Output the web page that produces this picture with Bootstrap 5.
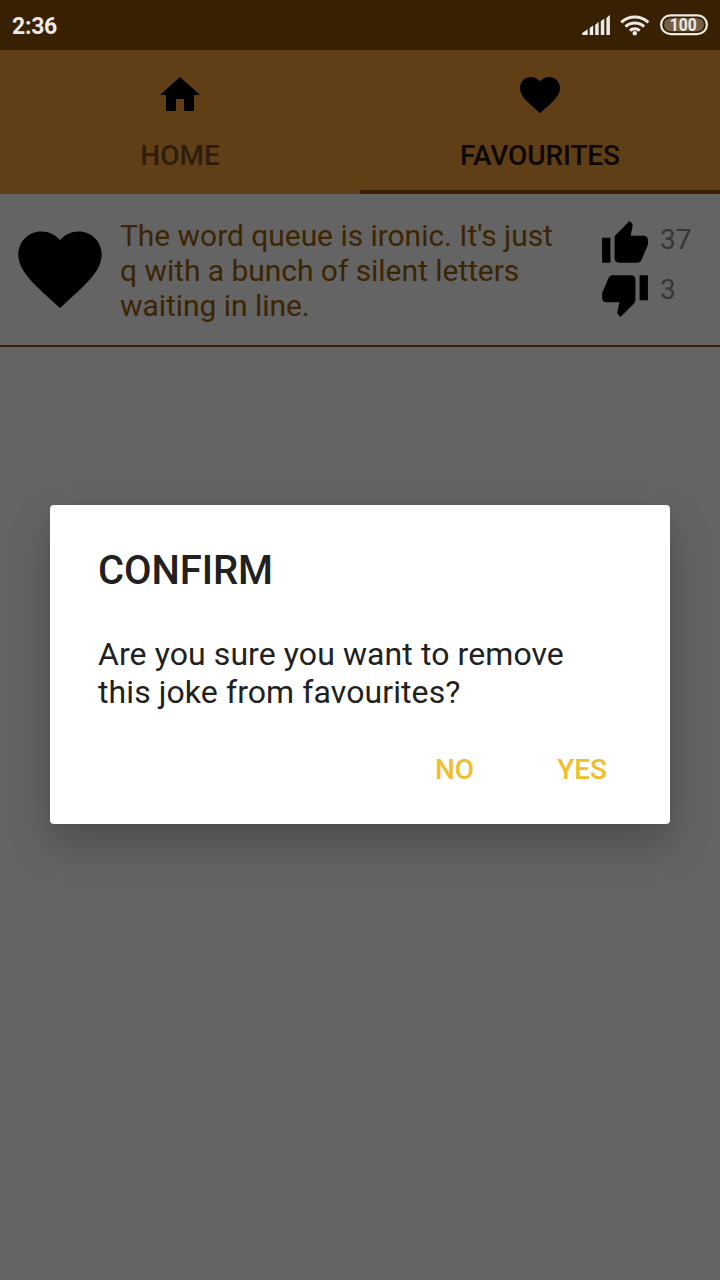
<!DOCTYPE html>
<html lang="en">
<head>
<meta charset="utf-8">
<meta name="viewport" content="width=device-width, initial-scale=1">
<title>Favourites</title>
<link href="https://cdn.jsdelivr.net/npm/bootstrap@5.3.0/dist/css/bootstrap.min.css" rel="stylesheet">
<style>
  body { font-family: Roboto, sans-serif; background: #646464; height: 1280px; overflow: hidden; color: #212121; }
  svg { display: block; flex: none; }
  .status-bar { height: 50px; background: #382103; color: #ece9e6; padding: 0 12px; }
  .clock { font-size: 23px; font-weight: 700; line-height: 46px; letter-spacing: -.25px; padding-top: 4px; }
  .charge { font-size: 18.500px; font-weight: 700; }
  .tabs { height: 144px; background: #603e16; }
  .tab { padding-top: 21px; border-bottom: 4px solid transparent; color: #2e1d0c; font-size: 28px; line-height: 33px; font-weight: 500; gap: 20px; }
  .tab.current { border-color: #382103; color: #0c0803; letter-spacing: -.1px; }
  .joke { height: 153px; border-bottom: 2px solid #382203; padding: 0 0 1px 10px; }
  .joke-heart { margin-top: -1px; }
  .joke-text { font-size: 30px; line-height: 35px; letter-spacing: -.045px; color: #3c2503; width: 450px; margin: 3px 0 0 10px; }
  .votes { margin-left: 30px; color: #363636; font-size: 28px; line-height: 42px; }
  .vote { height: 50px; gap: 10px; }
  .dialog-layer { position: absolute; inset: 50px 0 0; }
  .dialog { width: 620px; height: 319px; margin-top: -1px; background: #fff; border-radius: 4px; padding: 42px 48px 0; box-shadow: 0 20px 44px rgba(0,0,0,.24), 0 0 6px rgba(0,0,0,.05); }
  .dialog h1 { font-size: 40px; line-height: 48px; font-weight: 500; letter-spacing: -.1px; margin: 0; }
  .dialog p { font-size: 32px; line-height: 38px; letter-spacing: .09px; margin: 40px 0 0; }
  .actions { margin-top: 42px; gap: 83px; padding-right: 15px; }
  .actions .btn { border: 0; padding: 0; color: #f0bd2c; font-size: 28px; line-height: 34px; font-weight: 500; }
</style>
</head>
<body>
<header class="status-bar d-flex align-items-center justify-content-between">
  <span class="clock">2:36</span>
  <svg width="126" height="26" viewBox="582 12 126 26" fill="#ece9e6">
    <path d="M582.200 35v-2l5.500-3.800V35zM589.700 35v-7l3.500-2.700V35zM595.200 35V24.800l3.500-2.700V35zM600.800 35V21.300l3.500-2.800V35zM606.400 35V18.100l3.500-3.100V35z"/>
    <g fill="none" stroke="#ece9e6" stroke-width="3">
      <path d="M621.300 22.400a19.500 19.500 0 0 1 27 0M625.500 26.700a13.500 13.500 0 0 1 18.600 0M629.900 30.700a7.300 7.300 0 0 1 9.800 0"/>
      <rect x="661.100" y="15.300" width="45.800" height="18.800" rx="9.400" stroke-width="2.200"/>
    </g>
    <circle cx="634.800" cy="33.200" r="2.200"/>
    <rect x="664" y="18.200" width="40" height="13" rx="6.500" fill="#735f48"/>
    <text class="charge" x="683.300" y="31.200" text-anchor="middle" textLength="27" lengthAdjust="spacingAndGlyphs">100</text>
  </svg>
</header>

<nav class="tabs d-flex">
  <div class="tab col-6 d-flex flex-column align-items-center">
    <svg width="48" height="48" viewBox="0 0 24 24"><path d="M10 20v-6h4v6h5v-8h3L12 3 2 12h3v8z"/></svg>
    <span>HOME</span>
  </div>
  <div class="tab current col-6 d-flex flex-column align-items-center">
    <svg width="48" height="48" viewBox="0 0 24 24" fill="#000"><path d="M12 21.100l-1.450-1.320C5.400 15.360 2 12.280 2 8.500 2 5.420 4.420 3 7.500 3c1.740 0 3.410.81 4.500 2.090C13.090 3.810 14.760 3 16.500 3 19.580 3 22 5.420 22 8.500c0 3.780-3.400 6.860-8.550 11.290z"/></svg>
    <span>FAVOURITES</span>
  </div>
</nav>

<main>
  <article class="joke d-flex align-items-center">
    <svg class="joke-heart" width="100" height="100" viewBox="0 0 24 24" fill="#000"><path d="M12 21.350l-1.450-1.320C5.400 15.360 2 12.280 2 8.500 2 5.420 4.420 3 7.500 3c1.740 0 3.410.81 4.500 2.090C13.090 3.810 14.760 3 16.500 3 19.580 3 22 5.420 22 8.500c0 3.780-3.400 6.860-8.550 11.540z"/></svg>
    <div class="joke-text">The word queue is ironic. It's just<br>q with a bunch of silent letters<br>waiting in line.</div>
    <div class="votes">
      <div class="vote d-flex">
        <svg width="50" height="50" viewBox="0 0 24 24" fill="#000"><path d="M1 21h4V9H1v12zm22-11c0-1.100-.9-2-2-2h-6.310l.95-4.570.03-.32c0-.41-.17-.79-.44-1.060L14.170 1 7.590 7.590C7.220 7.950 7 8.450 7 9v10c0 1.100.9 2 2 2h9c.83 0 1.540-.5 1.840-1.220l3.020-7.050c.09-.23.14-.47.14-.73v-2z"/></svg>
        <span>37</span>
      </div>
      <div class="vote d-flex">
        <svg width="50" height="50" viewBox="0 0 24 24" fill="#000"><path d="M15 3H6c-.83 0-1.540.5-1.840 1.220l-3.020 7.050c-.09.23-.14.47-.14.73v2c0 1.100.9 2 2 2h6.310l-.95 4.570-.03.32c0 .41.17.79.44 1.060L9.830 23l6.590-6.590c.36-.36.58-.86.58-1.410V5c0-1.100-.9-2-2-2zm4 0v12h4V3h-4z"/></svg>
        <span>3</span>
      </div>
    </div>
  </article>
</main>

<div class="dialog-layer d-flex align-items-center justify-content-center">
  <section class="dialog" role="dialog">
    <h1>CONFIRM</h1>
    <p>Are you sure you want to remove<br>this joke from favourites?</p>
    <div class="actions d-flex justify-content-end">
      <button class="btn" type="button">NO</button>
      <button class="btn" type="button">YES</button>
    </div>
  </section>
</div>
<script src="https://cdn.jsdelivr.net/npm/bootstrap@5.3.0/dist/js/bootstrap.bundle.min.js"></script>
</body>
</html>
